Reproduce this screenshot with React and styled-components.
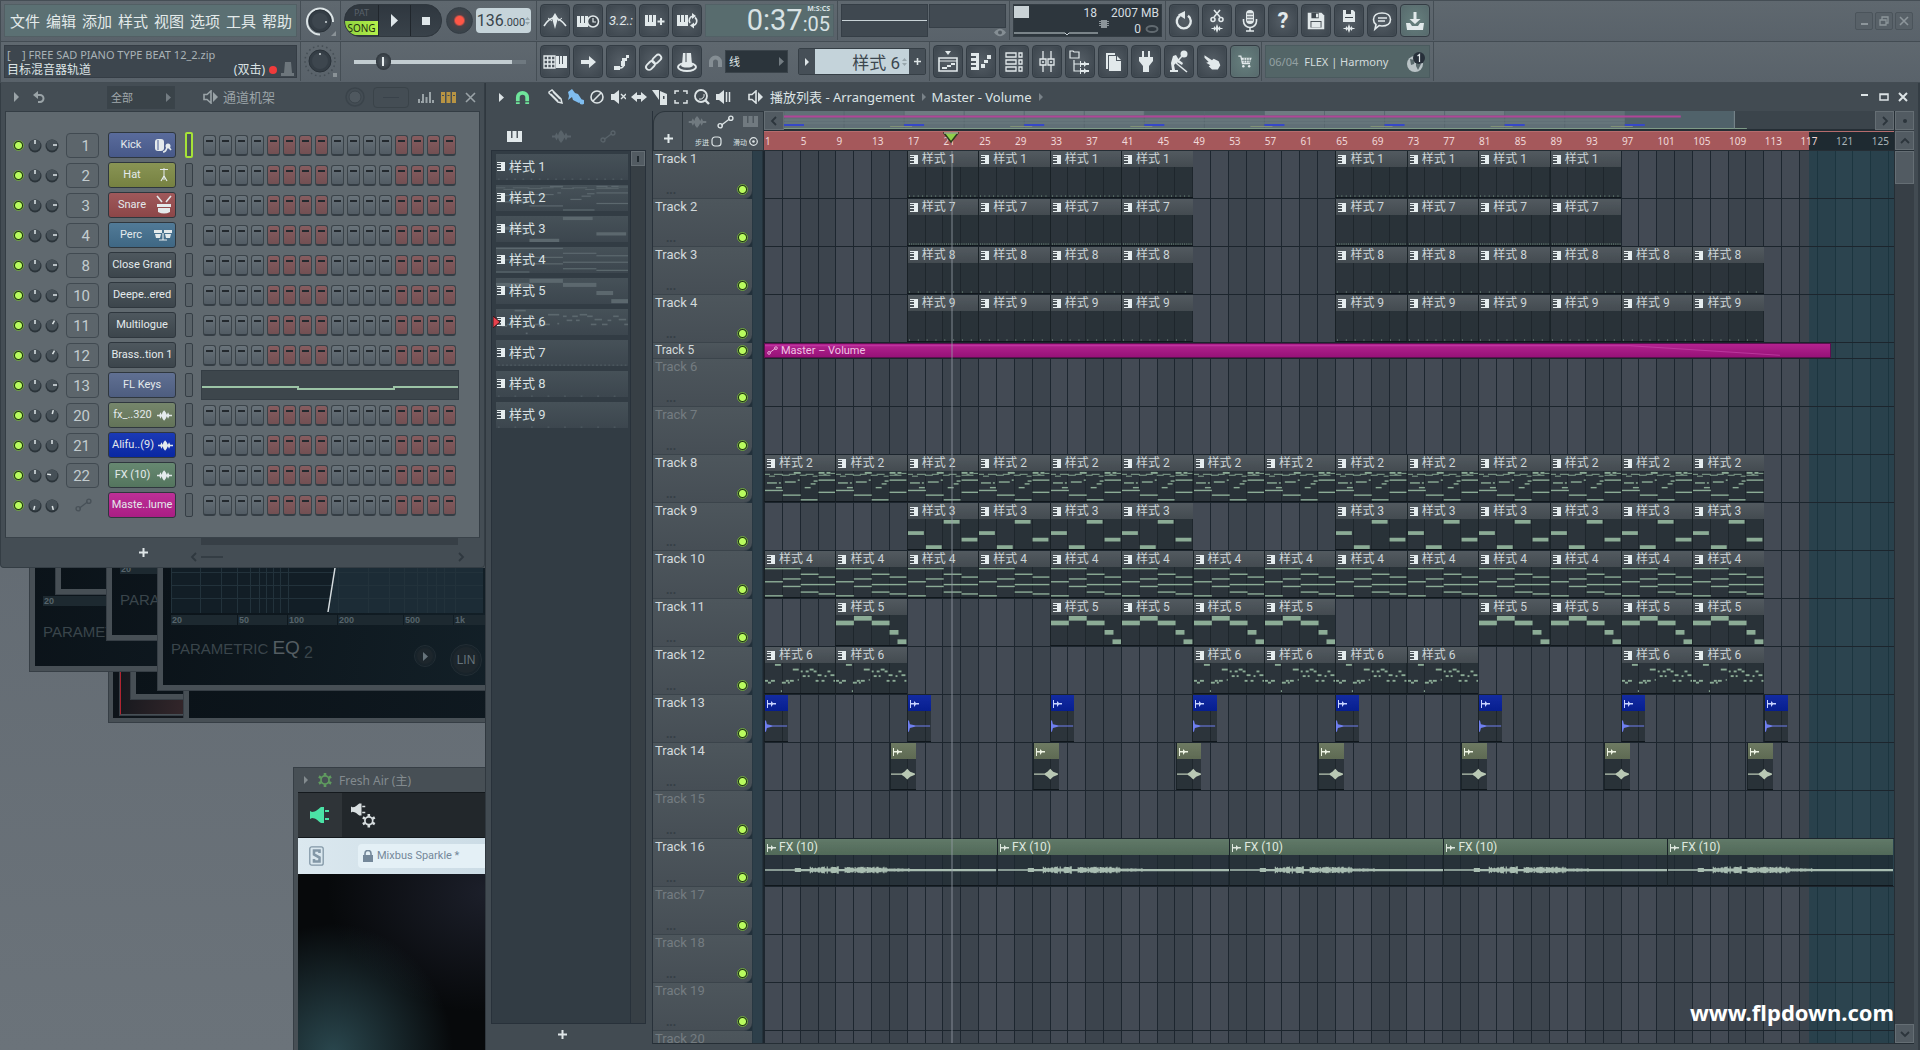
import React from "react";
import styled, { createGlobalStyle, css } from "styled-components";

const UI = `"Noto Sans", "Noto Sans CJK SC", sans-serif`;
const NARROW = `Roboto, "Noto Sans CJK SC", sans-serif`;

const Global = createGlobalStyle`
  * { box-sizing: border-box; }
  body { margin: 0; background: #626a72; overflow: hidden; }
  button, input, select { font: inherit; color: inherit; margin: 0; padding: 0; border: 0; background: none; outline: none; }
  svg { display: block; flex: none; }
`;

/* ---------- timeline data ---------- */
const TOTAL_BARS = 126.57;
const pct = (bars) => `${(bars / TOTAL_BARS) * 100}%`;
const every8 = (from, to) => {
  const out = [];
  for (let b = from; b <= to; b += 8) out.push(b);
  return out;
};
const pat = (n, starts) => starts.map((s) => ({ kind: "pattern", n, at: s, len: 8 }));
const TRACKS = [
  { name: "Track 1", clips: pat(1, [...every8(17, 41), ...every8(65, 89)]) },
  { name: "Track 2", clips: pat(7, [...every8(17, 41), ...every8(65, 89)]) },
  { name: "Track 3", clips: pat(8, [...every8(17, 41), ...every8(65, 105)]) },
  { name: "Track 4", clips: pat(9, [...every8(17, 41), ...every8(65, 105)]) },
  { name: "Track 5", slim: true, clips: [{ kind: "auto", at: 1, len: 119.5 }] },
  { name: "Track 6", off: true, clips: [] },
  { name: "Track 7", off: true, clips: [] },
  { name: "Track 8", clips: pat(2, every8(1, 105)) },
  { name: "Track 9", clips: pat(3, [...every8(17, 41), ...every8(65, 105)]) },
  { name: "Track 10", clips: pat(4, every8(1, 105)) },
  { name: "Track 11", clips: pat(5, [9, ...every8(33, 57), ...every8(81, 105)]) },
  { name: "Track 12", clips: pat(6, [1, 9, ...every8(49, 73), 97, 105]) },
  { name: "Track 13", clips: [1, 17, 33, 49, 65, 81, 97, 113].map((at) => ({ kind: "hit", at, len: 2.7 })) },
  { name: "Track 14", clips: [0, 1, 2, 3, 4, 5, 6].map((k) => ({ kind: "swell", at: 15.1 + 16 * k, len: 2.9 })) },
  { name: "Track 15", off: true, clips: [] },
  {
    name: "Track 16",
    clips: [
      { kind: "fx", at: 1, len: 26.1 },
      { kind: "fx", at: 27.1, len: 26 },
      { kind: "fx", at: 53.1, len: 24 },
      { kind: "fx", at: 77.1, len: 25 },
      { kind: "fx", at: 102.1, len: 25.4 },
    ],
  },
  { name: "Track 17", off: true, clips: [] },
  { name: "Track 18", off: true, clips: [] },
  { name: "Track 19", off: true, clips: [] },
  { name: "Track 20", off: true, clips: [] },
];

const ticks = (step, h) => {
  const out = [];
  for (let x = 1; x < 71; x += step) out.push([x, 32 - h, 1, h]);
  return out;
};
/* x, y, width, height inside a 71 x 32 clip body */
const NOTES = {
  1: ticks(4.4, 2),
  7: ticks(2.2, 2),
  8: ticks(8.9, 2),
  9: ticks(8.9, 2),
  2: [
    [0, 3, 5, 1], [4, 5, 6, 1], [9, 3, 9, 1], [17, 4, 8, 1], [24, 3, 7, 1], [29, 1, 7, 2], [35, 4, 7, 1],
    [41, 3, 8, 1], [48, 5, 5, 1], [54, 1, 6, 2], [59, 3, 3, 1], [62, 1, 4, 2], [66, 2, 5, 1], [54, 4, 12, 1],
    [2, 12, 10, 1.5], [14, 12, 2, 1.5], [20, 11, 11, 1.5], [33, 9, 2, 1.5], [54, 9, 17, 1.5], [11, 17, 6, 1.5],
    [40, 17, 6, 1.5], [46, 13, 5, 1.5], [49, 10, 4, 1.5], [0, 20, 18, 1.5], [18, 25, 18, 1.5], [36, 30, 17, 1.5], [54, 22, 17, 1.5],
  ],
  3: [[0, 13, 16, 4], [18, 28, 16, 4], [36, 1, 16, 4], [54, 20, 16, 4]],
  4: [
    [0, 1, 36, 1.5], [0, 15, 18, 1.5], [0, 30, 18, 1.5], [18, 12, 18, 1.5], [18, 20, 18, 1.5], [36, 7, 18, 1.5],
    [36, 18, 35, 1.5], [36, 26, 18, 1.5], [54, 10, 17, 1.5], [54, 28, 17, 1.5],
  ],
  5: [[0, 6, 18, 5], [18, 1, 18, 5], [36, 6, 18, 5], [54, 16, 9, 5], [62, 26, 9, 5]],
  6: [
    [10, 1, 6, 2], [0, 18, 3, 2], [3, 20, 3, 2], [6, 18, 4, 2], [16, 29, 1, 2], [17, 20, 4, 2], [21, 18, 3, 2],
    [25, 18, 4, 2], [23, 20, 2, 2], [33, 17, 1, 2], [28, 6, 6, 2], [36, 8, 2, 2], [38, 13, 3, 2], [41, 8, 3, 2],
    [45, 6, 4, 2], [43, 13, 2, 2], [49, 8, 3, 2], [51, 18, 3, 2], [53, 12, 4, 2], [57, 18, 3, 2], [60, 13, 2, 2],
    [63, 8, 3, 2], [66, 12, 4, 2], [69, 18, 2, 2],
  ],
};

/* ---------- icons ---------- */
const Svg = ({ s = 24, w, h, vb, children, ...p }) => (
  <svg width={w || s} height={h || s} viewBox={vb || `0 0 ${w || s} ${h || s}`} fill="currentColor" aria-hidden="true" {...p}>
    {children}
  </svg>
);
const keys = "h3v7h1v-7h3v7h1v-7h3v11h-11z";
const wave = "M0 4h2l1-2 1 2 1.500-4 1.500 4 1-2 1 2h2v1h-2l-1 2-1-2-1.500 4-1.500-4-1 2-1-2h-2z";
const line = { fill: "none", stroke: "currentColor", strokeWidth: 1.6 };

const ICONS = {
  metronome: <><path d="M1 17q5-8 10-8q6 0 12 8" {...line} /><path d="M5 9l4 3M19 9l-4 3" {...line} strokeWidth="1" /><path d="M12 4l3 5-3 11-3-11z" /></>,
  pianoClock: <><path d={"M1 7" + keys} /><circle cx="17" cy="12.500" r="5.500" fill="#3f474e" stroke="currentColor" strokeWidth="1.500" /><path d="M17 9v4h3" {...line} strokeWidth="1.200" /></>,
  pianoPlus: <><path d={"M3 6" + keys} /><path d="M18 9h2v2.500h2.500v2H20v2.500h-2v-2.500h-2.500v-2H18z" /></>,
  pianoLoop: <><path d={"M2 6" + keys} /><path d="M15 14a4.500 4.500 0 0 1 3-7M20 8.500a4.500 4.500 0 0 1-2 8" {...line} /><path d="M17 4l4 3-4 3zM19 13.500l-4 3 4 3z" /></>,
  typing: <><path d="M1 6h11v12H1zM1 10h11M1 14h11M4.700 6v12M8.400 6v12" {...line} strokeWidth="1.300" /><path d="M13 6h3v8h1V6h2v8h1V6h4v12H13z" /></>,
  arrow: <path d="M5 10h8V6l7 6-7 6v-4H5z" />,
  slide: <><path d="M5 18h6c3 0 4-2 4-5" {...line} strokeWidth="1.600" /><rect x="5" y="16" width="6" height="4" /><rect x="12" y="11" width="4" height="5" /><path d="M13 8h5v3h-5zM17 5h3v3h-3z" /></>,
  link: <g transform="rotate(-45 12 12)" {...line} strokeWidth="1.800"><rect x="2" y="9" width="10" height="6" rx="3" /><rect x="11" y="9" width="10" height="6" rx="3" /></g>,
  hat: <><path d="M8 3h8l1 12H7z" /><path d="M11 3v11" stroke="#3f474e" /><ellipse cx="12" cy="17" rx="9" ry="4" {...line} strokeWidth="2" /><ellipse cx="12" cy="15.500" rx="6" ry="2" /></>,
  undo: <><path d="M8 6.500A7 7 0 1 0 16 6.800" {...line} strokeWidth="2.400" /><path d="M13 2v8L6 5.500z" /></>,
  cut: <><g {...line}><path d="M9 8l6-7M15 8L9 1" /><circle cx="8" cy="10.500" r="2" /><circle cx="16" cy="10.500" r="2" /></g><path transform="translate(6.500 15)" d={wave} /></>,
  mic: <><rect x="8" y="1" width="8" height="14" rx="4" /><path d="M9 5h6M9 8h6M9 11h6" stroke="#3f474e" /><path d="M5.500 10v2a6.500 6.500 0 0 0 13 0v-2M12 18v4M8 22h8" {...line} /></>,
  save: <><path d="M3 3h15l3 3v15H3z" /><path d="M7 3h8v6H7zM6 12h12v7H6z" fill="#3f474e" /><rect x="12" y="4" width="2.500" height="4" /><path d="M7 13h10v6H7z" /></>,
  saveWave: <><path d="M6 1h10l2 2v10H6z" /><path d="M9 1h5v4H9zM8 8h8v1H8z" fill="#3f474e" /><path transform="translate(6.500 15)" d={wave} /></>,
  chat: <><path d="M12 4c5 0 8.500 2.500 8.500 6.500S17 17 12 17c-1 0-2-.1-3-.4L5 20l1-4.500C4.300 14.300 3.500 12.500 3.500 10.500 3.500 6.500 7 4 12 4z" {...line} /><path d="M8 9h9M8 12h7" {...line} /></>,
  down: <><path d="M10.500 3h3v7h4L12 15 6.500 10h4z" /><path d="M3 14h4l2 3h6l2-3h4l-1 7H4z" /></>,
  playlist: <><path d="M9 1h6l-3 4z" /><path d="M3 8h18v13H3z" {...line} /><path d="M3 11h18" {...line} strokeWidth="1" /><path d="M6 17h5v2H6zM11 15h4v2h-4zM15 13h4v2h-4z" /></>,
  roll: <><path d="M2 3h8v17H2v-3h5v-2H2v-2h5v-2H2V8h5V6H2z" /><path d="M12 14h4v4h-4zM15 10h4v3h-4zM18 5h4v4h-4z" /></>,
  rack: <path d="M4 3h10v4H4zM4 10h10v4H4zM4 17h10v4H4zM17 3h3v4h-3zM17 10h3v4h-3zM17 17h3v4h-3z" {...line} strokeWidth="1.300" />,
  mixer: <path d="M8 1v8M8 15v7M16 1v8M16 15v7M5 9h6v6H5zM13 9h6v6h-6zM7 12h2M15 12h2" {...line} strokeWidth="1.300" />,
  browser: <><path d="M2 1h3l1 1h5v6H2z" {...line} strokeWidth="1.200" /><path d="M6 10v11h6M6 14h6" {...line} strokeWidth="1.200" /><path d="M12 11h1v2h3v-2l2 2h3v2h-3l-2 2v-2h-3v2h-1zM12 18h1v2h3v-2l2 2h3v2h-3l-2 2v-2h-3v2h-1z" /></>,
  copy: <><path d="M5 3h9v2H7v14H5z" /><path d="M8 6h7v5h5v10H8z" /><path d="M16 6l4 4h-4z" /></>,
  plug: <><path d="M8 1h2v6H8zM14 1h2v6h-2zM5 7h14v4l-4 5v6H9v-6l-4-5z" /></>,
  tap: <><circle cx="17" cy="4" r="3.500" /><path d="M15 6l-6 7" {...line} /><path d="M6 6l3-1 3 5 4 3-1 2-5-3-3 3 1 5h3v2H3v-2h2l-1-7z" /><path d="M9 13l11 9" {...line} /></>,
  hand: <path d="M3 4l9 6 2-2 6 3 2 5-3 5h-7l-4-4 2-1-5-3 3-1-5-5z" />,
  cart: <><path d="M4 5h3l2 9h9" {...line} /><path d="M7.500 7H20l-2 6H9z" /><path d="M11 7v6M14 7v6M17 7v6M8 10h11" stroke="#5d7372" strokeWidth=".8" /><circle cx="10" cy="17" r="1.500" /><circle cx="17" cy="17" r="1.500" /></>,
};
const Icon = ({ name, s = 24 }) => <Svg s={s} vb="0 0 24 24">{ICONS[name]}</Svg>;

const Speaker = () => (
  <Svg w={16} h={14}><path d="M1 4.500h3l4-3.500v12l-4-3.500H1z" {...line} /><path d="M10 2l5 5-5 5z" /></Svg>
);
const Magnet = ({ s = 16 }) => (
  <Svg s={s} vb="0 0 16 16"><path d="M1 12V8a7 7 0 0 1 14 0v4h-4V8a3 3 0 0 0-6 0v4z" /><path d="M1 13h4v2H1zM11 13h4v2h-4z" /></Svg>
);
const Tri = ({ w = 5, h = 9 }) => <Svg w={w} h={h}><path d={`M0 0L${w} ${h / 2}L0 ${h}z`} /></Svg>;
const Node = ({ w = 16, h = 13 }) => (
  <Svg w={w} h={h} vb="0 0 16 13"><path d="M4 9.500l8-6" {...line} strokeWidth="1.300" /><circle cx="3" cy="10" r="2" {...line} strokeWidth="1.300" /><circle cx="13" cy="3" r="2" {...line} strokeWidth="1.300" /></Svg>
);
const Wave = ({ w = 19, h = 13 }) => (
  <Svg w={w} h={h} vb="0 0 19 13"><path d="M0 5.500h3l1.500-3 1.500 3 1-3 2-2.500 2 2.500 1.500 3 1.500-3 1.500 3H19v2h-3.500l-1.500 3-1.500-3L11 10.500 9 13l-2-2.500-1-3-1.500 3-1.500-3H0z" /></Svg>
);
const Keys = ({ w = 15, h = 11 }) => <Svg w={w} h={h} vb="0 0 11 11" preserveAspectRatio="none"><path d={"M0 0" + keys} /></Svg>;
const Plus = ({ s = 9 }) => <Svg s={s} vb="0 0 9 9"><path d="M3.500 0h2v3.500H9v2H5.500V9h-2V5.500H0v-2h3.500z" /></Svg>;
const ClipKeys = () => <Svg s={9} color="#e6edef"><path d="M0 0h8v9H0V8h4V6H0V5h4V3H0V2h4V1H0z" /></Svg>;
const Sample = () => <Svg w={9} h={8}><path d="M0 0h1v3h3V1l2 2h3v1.500H6L4 7V4.500H1V8H0z" /></Svg>;
const Chev = ({ dir }) => (
  <Svg s={10}><path d={{ left: "M7 1L3 5l4 4", right: "M3 1l4 4-4 4", up: "M1 7l4-4 4 4", down: "M1 3l4 4 4-4" }[dir]} {...line} strokeWidth="1.800" /></Svg>
);
const Spin = () => <Svg w={5} h={10}><path d="M0 4l2.500-3L5 4zM0 6l2.500 3L5 6z" /></Svg>;

/* ---------- shell ---------- */
const Shell = styled.div`
  height: 100vh; display: flex; flex-direction: column; overflow: hidden;
  background: #626a72; color: #dfe6e8; font-family: ${UI}; font-size: 12px;
`;
const Toolbar = styled.header`border-top: 1px solid #454e55; flex: none;`;
const ToolRow = styled.div`
  display: flex; height: 41px; background: linear-gradient(#5f686f, #59626a); padding-bottom: 1px;
  border-bottom: 1px solid #434c53; border-left: 1px solid #434c53;
`;
const Group = styled.div`
  display: flex; align-items: center; gap: 3px; flex: none; width: ${(p) => p.$w}px;
  padding: 0 3px; border-right: 1px solid #454e55;
`;
const Menu = styled.nav`
  flex: 1; height: 33px; display: flex; align-items: center; gap: 6px; padding-left: 5px;
  background: #5b7073; border: 1px solid #525f64;
`;
const MenuItem = styled.button`font-size: 15px; line-height: 30px; color: #e3eaea; white-space: nowrap;`;
const Hint = styled.div`
  flex: 1; height: 33px; padding: 1px 2px; background: #3d464e; border: 1px solid #353d45;
  line-height: 15px; font-size: 11px;
`;
const HintLine = styled.div`
  display: flex; align-items: center; gap: 4px; height: 15px; white-space: pre; font-size: ${(p) => (p.$dim ? 11 : 12)}px;
  color: ${(p) => (p.$dim ? "#a9b2b6" : "#dbe3e5")};
`;
const Grow = styled.span`flex: 1;`;
const Dot = styled.i`width: 8px; height: 8px; border-radius: 50%; background: #f03b3b;`;

const ToolBtn = styled.button`
  width: 30px; height: 33px; flex: none; display: flex; align-items: center; justify-content: center;
  border-radius: 4px; border: 1px solid #333c44; color: #e2e9eb;
  background: ${(p) => (p.$teal ? "radial-gradient(#67807e, #56696c)" : "radial-gradient(#555e66, #3b444c)")};
  box-shadow: inset 0 0 0 1px ${(p) => (p.$teal ? "#5d7072" : "#434c54")};
  font-size: ${(p) => (p.$big ? 22 : 13)}px;
  font-style: ${(p) => (p.$big ? "normal" : "italic")};
  font-family: ${NARROW};
`;
const Transport = styled.div`
  display: flex; width: 98px; height: 33px; border-radius: 16px; overflow: hidden; flex: none;
  background: #262d34; border: 1px solid #30383f;
`;
const ModeBtn = styled.button`
  width: 33px; display: flex; flex-direction: column; font-size: 9px; text-align: center; line-height: 16px; color: #59616a;
  background: #30383f; align-items: stretch;
`;
const Song = styled.span`
  display: block; background: linear-gradient(90deg, #8ed23f, #b4f04a); color: #1c2a12;
  font-size: 10px; line-height: 14px;
`;
const PadBtn = styled.button`
  flex: 1; display: flex; align-items: center; justify-content: center; color: #dfe7ea;
  border-left: 1px solid #20262c; background: linear-gradient(#2f373f, #39424a);
`;
const RecBtn = styled.button`
  width: 27px; height: 27px; border-radius: 50%; margin-left: 1px; flex: none;
  background: radial-gradient(circle, #ff5646 0 4px, #4a4248 6px, #3a434a 11px); border: 1px solid #343c44;
`;
const Tempo = styled.div`
  width: 55px; height: 25px; flex: none; border-radius: 4px; background: #c6d4da; color: #39444c;
  display: flex; align-items: center; justify-content: center; font-family: ${NARROW}; font-size: 16px; line-height: 25px;
  small { font-size: 11px; padding-top: 4px; }
  svg { color: #97a6ac; }
`;
const Pitch = styled.input`
  appearance: none; width: 172px; height: 16px; margin-left: 10px;
  background: linear-gradient(90deg, #c3cdd1 0 92%, #6f7980 92%) center / 100% 4px no-repeat;
  &::-webkit-slider-thumb {
    appearance: none; width: 15px; height: 17px; border-radius: 8px;
    background: linear-gradient(90deg, transparent 6px, #e6edef 6px 8px, transparent 8px) center / 100% 9px no-repeat, radial-gradient(#59626a, #20272d);
  }
`;
const TimeBox = styled.div`
  flex: 1; height: 33px; background: #586c6e; border: 1px solid #526166; padding-right: 3px;
  display: flex; justify-content: flex-end; font-family: ${NARROW}; font-size: 29px; line-height: 31px; color: #d8e2e4;
  div { display: flex; flex-direction: column; }
  small { font-size: 20px; line-height: 22px; }
  sup { text-align: right; font-family: ${UI}; font-size: 7px; line-height: 8px; font-weight: 700; }
`;
const Scope = styled.div`
  width: 87px; height: 33px; background: linear-gradient(#c9d3d7, #c9d3d7) center / 100% 1px no-repeat #3f4850;
  border: 1px solid #353e46;
`;
const Spectrum = styled.div`
  flex: 1; height: 33px; display: flex; flex-direction: column; align-items: flex-end; color: #858e94;
  &::before { content: ""; width: 100%; height: 24px; background: #414a52; border: 1px solid #363f47; }
`;
const Cpu = styled.div`
  flex: 1; height: 33px; display: grid; grid-template-columns: 85px 1fr; background: #2d363d; border: 1px solid #343d44;
  font-family: ${NARROW}; font-size: 12px; line-height: 16px; text-align: right; color: #d5dde0;
`;
const CpuMeter = styled.div`
  position: relative; padding-right: 2px;
  svg { position: absolute; left: 0; top: 0; color: #c9d2d6; }
`;
const CpuStats = styled.div`
  padding-right: 2px; position: relative;
  span { display: flex; justify-content: flex-end; align-items: center; gap: 4px; height: 16px; }
  > svg { position: absolute; left: 0; top: 15px; color: #8c959a; }
`;

const PickWrap = styled.label`
  position: relative; display: flex; align-items: center; width: ${(p) => p.$w}px; height: 23px; flex: none;
  background: ${(p) => (p.$dark ? "#2b343b" : "#3a4349")}; border: 1px solid #3a434a; color: ${(p) => (p.$dark ? "#dfe6e8" : "#a0a8ac")};
  select { appearance: none; width: 100%; height: 100%; padding-left: 3px; font-size: 11px; }
  svg { position: absolute; right: 3px; color: #737c82; pointer-events: none; }
`;
const PatternBox = styled.div`display: flex; height: 27px; margin-left: 7px; border: 1px solid #363f46; border-radius: 2px;`;
const PatBtn = styled.button`width: 16px; background: #464f57; display: flex; align-items: center; justify-content: center;`;
const PatField = styled.label`
  display: flex; align-items: center; width: 94px; background: #c4d3da; color: #3c474f; padding-right: 2px; gap: 2px;
  input { width: 100%; min-width: 0; text-align: right; font-size: 17px; font-family: ${NARROW}; }
  svg { color: #98a6ac; }
`;
const News = styled.div`
  flex: 1; height: 33px; display: flex; align-items: center; gap: 6px; padding: 0 3px; background: #536567;
  border: 1px solid #4a5a5e; font-size: 11px; color: #d3dcdd;
  time { color: #94a1a3; }
`;
const WinBtns = styled.div`margin-left: auto; display: flex; gap: 2px; align-items: center; padding-right: 7px;`;
const WinBtn = styled.button`
  width: 18px; height: 18px; border: 1px solid #4b545b; border-radius: 2px; color: #8d969b; background: #586168;
  display: flex; align-items: center; justify-content: center;
`;

const BigKnob = ({ arc }) => (
  <Svg s={33} vb="0 0 33 33">
    {arc ? <path d="M16 30.500A13 13 0 1 1 29 18" fill="none" stroke="#dce4e6" strokeWidth="2" /> : <circle cx="16" cy="16" r="15" fill="none" stroke="#454e55" strokeWidth="1.500" strokeDasharray="1.500 3" />}
    <circle cx="16" cy={arc ? 17 : 16} r="11" fill="#343d45" stroke="#2a3239" />
    <circle cx="16" cy={arc ? 17 : 16} r="8" fill="#3d464e" />
    <circle cx={arc ? 22 : 16} cy={arc ? 18 : 9} r="1" fill="#cfd7da" />
    {arc ? <path d="M32 27v5h-5z" fill="#8a9297" /> : <path d="M29 28h4v4h-4z" fill="#8a9297" />}
  </Svg>
);

const MENU = ["文件", "编辑", "添加", "样式", "视图", "选项", "工具", "帮助"];

function TopBar() {
  return (
    <Toolbar>
      <ToolRow>
        <Group $w={300}><Menu>{MENU.map((m) => <MenuItem key={m}>{m}</MenuItem>)}</Menu></Group>
        <Group $w={40}><BigKnob arc /></Group>
        <Group $w={196}>
          <Transport>
            <ModeBtn aria-label="PAT SONG">PAT<Song>SONG</Song></ModeBtn>
            <PadBtn aria-label="Play"><Tri w={7} h={13} /></PadBtn>
            <PadBtn aria-label="Stop"><Svg s={8}><path d="M0 0h8v8H0z" /></Svg></PadBtn>
          </Transport>
          <RecBtn aria-label="Record" />
          <Tempo><span>136</span><small>.000</small><Spin /></Tempo>
        </Group>
        <Group $w={301}>
          <ToolBtn aria-label="Metronome"><Icon name="metronome" /></ToolBtn>
          <ToolBtn aria-label="Wait for input"><Icon name="pianoClock" /></ToolBtn>
          <ToolBtn aria-label="Countdown">3.2.:</ToolBtn>
          <ToolBtn aria-label="Overdub"><Icon name="pianoPlus" /></ToolBtn>
          <ToolBtn aria-label="Loop recording"><Icon name="pianoLoop" /></ToolBtn>
          <TimeBox><span>0:37</span><div><sup>M:S:CS</sup><small>:05</small></div></TimeBox>
        </Group>
        <Group $w={172}>
          <Scope />
          <Spectrum><Svg w={12} h={9}><path d="M0 4.500Q6-3 12 4.500Q6 12 0 4.500z" /><circle cx="6" cy="4.500" r="2" fill="#525b62" /></Svg></Spectrum>
        </Group>
        <Group $w={156}>
          <Cpu>
            <CpuMeter>18<Svg w={84} h={31}><path d="M0 1h15v12H0z" /><path d="M0 28h51l2 2 2-2h29" {...line} strokeWidth="1" /></Svg></CpuMeter>
            <CpuStats><Svg w={10} h={8}><path d="M2 0h6v8H2zM0 1h10v1H0zM0 3h10v1H0zM0 5h10v1H0z" /></Svg><span>2007 MB</span><span>0<Svg w={14} h={8}><ellipse cx="7" cy="4" rx="5.500" ry="3" fill="none" stroke="#616a70" strokeWidth="2" /></Svg></span></CpuStats>
          </Cpu>
        </Group>
        <Group $w={268}>
          {["undo", "cut", "mic"].map((n) => <ToolBtn key={n} aria-label={n}><Icon name={n} /></ToolBtn>)}
          <ToolBtn $big aria-label="Help"><b>?</b></ToolBtn>
          {["save", "saveWave", "chat"].map((n) => <ToolBtn key={n} aria-label={n}><Icon name={n} s={n === "save" ? 22 : 24} /></ToolBtn>)}
          <ToolBtn $teal aria-label="Download"><Icon name="down" /></ToolBtn>
        </Group>
        <WinBtns>
          <WinBtn aria-label="Minimize"><Svg s={10}><path d="M2 7h7v2H2z" /></Svg></WinBtn>
          <WinBtn aria-label="Restore"><Svg s={10}><path d="M1 4h6v5H1zM3 4V1h6v6H7" {...line} strokeWidth="1.300" /></Svg></WinBtn>
          <WinBtn aria-label="Close"><Svg s={10}><path d="M1 1l8 8M9 1L1 9" {...line} /></Svg></WinBtn>
        </WinBtns>
      </ToolRow>
      <ToolRow>
        <Group $w={300}>
          <Hint>
            <HintLine $dim>{"[    ] FREE SAD PIANO TYPE BEAT 12_2.zip"}</HintLine>
            <HintLine>目标混音器轨道<Grow />(双击)<Dot /><Svg w={13} h={15} color="#6d767c"><path d="M4 0h6l1 11h2v3H0v-3h3z" /></Svg></HintLine>
          </Hint>
        </Group>
        <Group $w={40}><BigKnob /></Group>
        <Group $w={196}><Pitch type="range" defaultValue="14" aria-label="Song position" /></Group>
        <Group $w={393}>
          {["typing", "arrow", "slide", "link", "hat"].map((n) => <ToolBtn key={n} aria-label={n}><Icon name={n} /></ToolBtn>)}
          <Svg w={17} h={14} vb="-4 0 17 14" color="#858e94"><path d="M0 12V7a6.500 6.500 0 0 1 13 0v5H9V7a2.500 2.500 0 0 0-5 0v5z" /></Svg>
          <PickWrap $w={63} $dark><select aria-label="Snap"><option>线</option></select><Tri w={5} h={9} /></PickWrap>
          <PatternBox>
            <PatBtn aria-label="Pattern menu"><Tri w={4} h={8} /></PatBtn>
            <PatField><input aria-label="Pattern" defaultValue="样式 6" /><Spin /></PatField>
            <PatBtn aria-label="Add pattern"><Plus s={7} /></PatBtn>
          </PatternBox>
        </Group>
        <Group $w={332}>
          {["playlist", "roll", "rack", "mixer", "browser", "copy", "plug", "tap", "hand"].map((n) => <ToolBtn key={n} aria-label={n}><Icon name={n} s={n === "hand" ? 20 : 24} /></ToolBtn>)}
          <ToolBtn $teal aria-label="Shop"><Icon name="cart" s={20} /></ToolBtn>
        </Group>
        <Group $w={172}>
          <News>
            <time>06/04</time>FLEX | Harmony<Grow />
            <Svg s={20}><circle cx="9" cy="12" r="8" fill="#b9c3c6" /><path d="M4 7l5 1-1 4-3 1zM10 10l5 2-3 6-2-4z" fill="#5a6a6d" /><circle cx="13" cy="6" r="6" fill="#27303a" /><path d="M11.500 4l2-1.500V10" fill="none" stroke="#e3eaec" strokeWidth="1.200" /></Svg>
          </News>
        </Group>
      </ToolRow>
    </Toolbar>
  );
}

/* ---------- channel rack ---------- */
const Desk = styled.section`
  position: relative; width: 486px; flex: none; overflow: hidden; border-right: 1px solid #30383f;
  background: linear-gradient(#5d656d, #6b737a);
`;
const Rack = styled.div`
  position: relative; z-index: 5; background: #444d54; border: 1px solid #343d44; border-top: 0; padding: 0 4px;
  border-radius: 0 0 4px 4px;
`;
const RackHead = styled.div`height: 28px; display: flex; align-items: center; padding: 0 4px 0 9px; color: #9aa3a7;`;
const RackTitle = styled.span`font-size: 13px; line-height: 18px; margin-left: 4px; flex: 1;`;
const HeadBtn = styled.button`display: flex; align-items: center; color: ${(p) => p.$c || "inherit"}; margin-left: ${(p) => p.$ml || 0}px;`;
const SwingBox = styled.span`
  width: 36px; height: 21px; border: 1px solid #3a4349; border-radius: 4px; margin: 0 9px 0 8px;
  background: linear-gradient(#39424a, #39424a) center / 16px 1px no-repeat;
`;
const RackBody = styled.div`background: #60696f; border: 1px solid #343d44; border-bottom-color: #394249; padding: 18px 0; height: 427px;`;
const Row = styled.div`display: flex; align-items: center; height: 30px; padding-left: 7px;`;
const Led = styled.input`
  appearance: none; width: 11px; height: 11px; flex: none; border-radius: 50%;
  background: radial-gradient(circle, #b9fb5e 0 3px, #1f3214 4px, #2c451c 5px);
  border: 1px solid #6da43d;
`;
const Knobs = styled.div`display: flex; gap: 3px; margin-left: 4px;`;
const NumBox = styled.div`
  width: 33px; height: 25px; margin-left: 7px; flex: none; border: 1px solid #414a51; border-radius: 4px; background: #5c656b;
  font-family: ${NARROW}; font-size: 15px; line-height: 24px; text-align: right; padding-right: 8px; color: #c3cccf;
  &[data-link] { border-color: transparent; background: none; color: #485158; padding: 4px 0 0 8px; }
`;
const ChanBtn = styled.button`
  width: 68px; height: 26px; margin-left: 9px; flex: none; border-radius: 3px; border: 1px solid #2f373e; overflow: hidden;
  display: flex; align-items: center; justify-content: center; gap: 4px; white-space: nowrap; color: #e4eaec;
  font-family: ${NARROW}; font-size: 11px; line-height: 24px; ${(p) => p.$spread && css`justify-content: space-between; padding: 0 3px;`}
  background: linear-gradient(rgba(255,255,255,.07), rgba(0,0,0,.08)), ${(p) => p.$c};
`;
const Name = styled.span`flex: 1; text-align: center;`;
const Select = styled.i`
  width: 8px; height: 24px; margin: 0 10px 0 9px; flex: none; border: 1px solid #353e45; border-radius: 2px; background: #596268;
  ${(p) => p.$on && css`border: 2px solid #a6e337; height: 26px; background: #4b545a;`}
`;
const Steps = styled.div`display: flex; gap: 3px;`;
const Step = styled.input`
  appearance: none; width: 13px; height: 21px; border-radius: 3px; border: 1px solid #3a4349; border-bottom: 2px solid #343d44;
  background: linear-gradient(#23292e, #23292e) 50% 4px / 7px 2px no-repeat, linear-gradient(${(p) => (p.$red ? "#875c5f, #725053" : "#69737a, #525c64")});
`;
const MiniRoll = styled.div`width: 258px; height: 30px; margin-left: -2px; background: #3d464c; border: 1px solid #343d44;`;
const RackFoot = styled.div`height: 29px; display: flex; align-items: flex-start; padding: 0 14px 0 124px; color: #dfe6e8;`;
const AddBtn = styled.button`padding: 10px; color: #dfe6e8; line-height: 0;`;
const FootScroll = styled.div`
  flex: 1; margin-left: 31px; color: #2f383f;
  &::before { content: ""; display: block; height: 7px; margin: 0 8px 7px 12px; background: #373f46; }
  div { display: flex; justify-content: space-between; align-items: center; }
  i { width: 22px; height: 2px; background: #343d44; margin: 0 auto 0 2px; }
`;

const SmallKnob = ({ a }) => (
  <Svg w={14} h={15}>
    <circle cx="7" cy="8" r="6.500" fill="#2b343a" />
    <circle cx="7" cy="7" r="5.500" fill="#465057" />
    <path d="M7 2v4" stroke="#dfe6e8" strokeWidth="1.500" transform={`rotate(${a} 7 7)`} />
  </Svg>
);
const DRUMS = {
  kick: <Svg w={18} h={15}><rect x="1" y="1" width="9" height="12" rx="3" /><path d="M4 2v10" stroke="#4d5f96" /><path d="M9 14q3 0 4-5M13 7l4 5" {...line} /><circle cx="14" cy="8" r="2.500" /></Svg>,
  hat: <Svg w={16} h={16}><path d="M4 2h8v1H4zM7.500 1h1v12h-1z" /><path d="M8 9l-3 5M8 9l3 5" {...line} strokeWidth="1.200" /></Svg>,
  snare: <Svg w={16} h={20}><path d="M1 1l5 6M15 1l-5 6" {...line} /><path d="M1 9h14v3H1zM2 13h12v4q-6 3-12 0z" /></Svg>,
  perc: <Svg w={18} h={14}><path d="M0 2h8v3H0zM1 6h6l-1 4H2zM10 2h8v3h-8zM11 6h6l-1 4h-4z" /><path d="M5 12h8M9 5v7" {...line} strokeWidth="1.200" /></Svg>,
  wave: <Wave w={15} h={11} />,
};
const CHANNELS = [
  ["1", "Kick", "#4d6094", "kick", 0, 90],
  ["2", "Hat", "#808c47", "hat", 0, 90],
  ["3", "Snare", "#984c4e", "snare", 0, 90],
  ["4", "Perc", "#44708f", "perc", 0, 90],
  ["8", "Close Grand", "#414b52", null, 0, 90],
  ["10", "Deepe..ered", "#414b52", null, 0, 90],
  ["11", "Multilogue", "#414b52", null, 0, 30],
  ["12", "Brass..tion 1", "#414b52", null, 0, 30],
  ["13", "FL Keys", "#54658a", null, 0, 90],
  ["20", "fx_..320", "#6b7d60", "wave", 0, 15],
  ["21", "Alifu..(9)", "#0a2bb0", "wave", 0, 0],
  ["22", "FX (10)", "#5b7f66", "wave", 0, -80],
  ["", "Maste..lume", "#b8208f", null, 195, 165],
];

function ChannelRack() {
  return (
    <Rack>
      <RackHead>
        <HeadBtn aria-label="Rack menu"><Tri w={5} h={10} /></HeadBtn>
        <HeadBtn aria-label="Undo" $ml={14}><Svg s={12}><path d="M5 0v8L0 4z" /><path d="M4 4h3a3 3 0 0 1 0 7H5" {...line} strokeWidth="2" /></Svg></HeadBtn>
        <HeadBtn as="span" $ml={62}><PickWrap $w={68}><select aria-label="Channel filter"><option>全部</option></select><Tri w={5} h={9} /></PickWrap></HeadBtn>
        <HeadBtn as="span" $ml={28}><Speaker /></HeadBtn>
        <RackTitle>通道机架</RackTitle>
        <Svg s={20}><circle cx="10" cy="10" r="9" fill="none" stroke="#3b444b" strokeWidth="1.500" /><circle cx="10" cy="10" r="6" fill="#4f585f" stroke="#3b444b" /></Svg>
        <SwingBox />
        <HeadBtn aria-label="Graph editor"><Svg w={16} h={12}><path d="M0 8h2v4H0zM3 10h2v2H3zM4 3h2v9H4zM7.500 6h2v6h-2zM11 1h2v11h-2zM14 9h2v3h-2z" /></Svg></HeadBtn>
        <HeadBtn aria-label="Step sequencer" $c="#b89443" $ml={7}><Svg w={15} h={11}><path d="M0 0h4v11H0zM5.500 0h4v11h-4zM11 0h4v11h-4z" /><path d="M1 3h2v1H1zM6.500 3h2v1h-2zM12 3h2v1h-2z" fill="#444d54" /></Svg></HeadBtn>
        <HeadBtn aria-label="Close rack" $ml={9}><Svg s={11}><path d="M1 1l9 9M10 1l-9 9" {...line} /></Svg></HeadBtn>
      </RackHead>
      <RackBody>
        {CHANNELS.map(([num, name, color, icon, pan, vol], r) => (
          <Row key={name}>
            <Led type="checkbox" defaultChecked aria-label={`${name} on`} />
            <Knobs><SmallKnob a={pan} /><SmallKnob a={vol} /></Knobs>
            <NumBox data-link={num ? undefined : ""}>{num || <Node w={17} h={14} />}</NumBox>
            <ChanBtn $c={color} $spread={!!icon}><Name>{name}</Name>{icon && DRUMS[icon]}</ChanBtn>
            <Select $on={r === 0} />
            {name === "FL Keys" ? (
              <MiniRoll><Svg w={256} h={28}><path d="M0 16h96v2h96v-2h64" fill="none" stroke="#9cc4a6" strokeWidth="2" /></Svg></MiniRoll>
            ) : (
              <Steps>{Array.from({ length: 16 }, (_, i) => <Step key={i} type="checkbox" aria-label={`${name} step ${i + 1}`} $red={(i >> 2) % 2 === 1} />)}</Steps>
            )}
          </Row>
        ))}
      </RackBody>
      <RackFoot>
        <AddBtn aria-label="Add channel"><Plus /></AddBtn>
        <FootScroll><div><Chev dir="left" /><i /><Chev dir="right" /></div></FootScroll>
      </RackFoot>
    </Rack>
  );
}

/* ---------- desktop windows behind the rack ---------- */
const Win = styled.div`
  position: absolute; left: ${(p) => p.$x}px; top: ${(p) => p.$y}px; width: ${(p) => p.$w}px; height: ${(p) => p.$h}px;
  border: ${(p) => p.$b || 5}px solid #474f55; outline: 1px solid #363e45; background: linear-gradient(100deg, #0b1319, ${(p) => p.$to || "#111c24"});
  overflow: hidden; color: #364147; font-family: "Liberation Sans", sans-serif;
`;
const RedWin = styled(Win)`border-left: 1px solid #b02430;`;
const EqName = styled.div`
  font-size: 15px; line-height: 20px; white-space: nowrap; padding-left: 8px; color: #3a454b;
  b { font-size: 19px; font-weight: 400; color: #545d62; } sub { font-size: 16px; }
`;
const EqScale = styled.div`
  display: flex; height: 10px; margin: ${(p) => p.$mt || 2}px 0 ${(p) => p.$mb || 0}px 8px; gap: 1px; font-size: 9px; line-height: 10px; font-weight: 700; color: #56646b;
  span { background: #1d2930; flex: none; padding-left: 1px; }
`;
const EqFoot = styled.div`display: flex; align-items: flex-start; padding-top: 13px;`;
const RoundBtn = styled.button`
  width: ${(p) => p.$s}px; height: ${(p) => p.$s}px; border-radius: 50%; background: #1d262c; border: 2px solid #18232a; outline: 1px solid #222d34;
  color: #66737a; font-size: 12px; display: flex; align-items: center; justify-content: center; flex: none; margin: ${(p) => p.$mt}px ${(p) => p.$mr}px 0 0;
`;
const AirHead = styled.div`
  height: 24px; display: flex; align-items: center; gap: 7px; padding-left: 6px; background: #474f55; color: #838b8f; font-family: ${UI}; font-size: 12px;
  svg + svg { color: #5f9a5f; margin-left: 3px; }
`;
const AirTools = styled.div`height: 46px; display: flex; background: #22272b; border: 1px solid #14191d; border-width: 1px 0;`;
const AirTab = styled.button`width: 44px; display: flex; align-items: center; justify-content: center; background: ${(p) => (p.$on ? "#2f3438" : "none")}; color: ${(p) => (p.$on ? "#4be3a6" : "#d9dfe1")};`;
const AirBar = styled.div`height: 36px; display: flex; align-items: center; gap: 34px; padding-left: 11px; background: linear-gradient(90deg, #dbe8ef, #c3d5e0); color: #73899a;`;
const Preset = styled.div`flex: 1; height: 24px; display: flex; align-items: center; gap: 4px; padding-left: 5px; border-radius: 4px 0 0 4px; background: #e4f0f6; font: 11px/24px Roboto, sans-serif; color: #74889a; white-space: nowrap;`;
const AirView = styled.div`
  height: 180px; border-radius: 6px 0 0 0; background:
  radial-gradient(120px 130px at 35px 100%, #2a474e, transparent), radial-gradient(160px 120px at 190px 10%, #1c1f2a, transparent), #07090b;
`;
const Air = styled(Win)`background: #0a0d0f; border-top: 0; border-right: 0;`;

function EqPlot() {
  const v = [0, 29, 50, 66, 79, 88, 95, 102, 109, 117, 167, 197, 218, 233, 246, 256, 265, 273, 284];
  return (
    <Svg w={320} h={45} vb="-8 0 320 45">
      <path d="M0 0h320v45H0z" fill="#121e26" />
      <path d={"M165 0h155v45H158z"} fill="#1c2c36" />
      <path d={v.map((x) => `M${x + 0.5} 0v45`).join("") + "M0 4.500h320M0 17.500h320M0 30.500h320"} stroke="#22323b" fill="none" />
      <path d="M164 0l-7 44" stroke="#d5dcdf" strokeWidth="1.500" />
    </Svg>
  );
}
const gearPath = "M8 0v3M8 13v3M1 4l2.600 1.500M12.400 10.500L15 12M1 12l2.600-1.500M12.400 5.500L15 4";
const Gear = ({ s = 15 }) => (
  <Svg s={s} vb="0 0 16 16"><circle cx="8" cy="8" r="4.600" {...line} strokeWidth="2" /><path d={gearPath} {...line} strokeWidth="3" /></Svg>
);
const plugPath = "M0 6l2 1c4 0 6-3 9-5h3v16h-3c-3-2-5-5-9-5l-2 1zM15 5h4v2h-4zM15 13h4v2h-4z";

function Desktop() {
  return (
    <Desk>
      <ChannelRack />
      <Win $x={109} $y={440} $w={420} $h={199} $b={4} $to="#2c2327">
        <RedWin $x={7} $y={0} $w={64} $h={188} $b={1} $to="#33262a" />
        <Win $x={18} $y={100} $w={500} $h={72} />
        <Win $x={71} $y={120} $w={500} $h={76} $to="#111c24" />
      </Win>
      <Win $x={30} $y={400} $w={300} $h={188}>
        <Win $x={21} $y={60} $w={220} $h={46} />
        <EqScale $mt={108} $mb={16}><span>20{"\u00a0".repeat(60)}</span></EqScale>
        <EqName>PARAMETRIC</EqName>
      </Win>
      <Win $x={107} $y={400} $w={300} $h={157}>
        <EqScale $mt={76} $mb={16}><span>20{"\u00a0".repeat(60)}</span></EqScale>
        <EqName>PARAMETRIC</EqName>
      </Win>
      <Win $x={158} $y={480} $w={400} $h={127} $to="#14222a">
        <EqPlot />
        <EqScale>
          {[["20", 66], ["50", 49], ["100", 49], ["200", 65], ["500", 49], ["1k", 60]].map(([t, w]) => <span key={t} style={{ width: w }}>{t}</span>)}
        </EqScale>
        <EqFoot>
          <EqName>PARAMETRIC <b>EQ</b> <sub>2</sub></EqName><Grow />
          <RoundBtn $s={20} $mt={8} $mr={16} aria-label="Presets"><Tri w={5} h={9} /></RoundBtn>
          <RoundBtn $s={30} $mt={7} $mr={72} aria-label="Linear phase">LIN</RoundBtn>
        </EqFoot>
      </Win>
      <Air $x={294} $y={685} $w={300} $h={400} $b={4}>
        <AirHead><Tri w={4} h={8} /><Gear s={14} /><span>Fresh Air (主)</span></AirHead>
        <AirTools>
          <AirTab $on aria-label="Plugin"><Svg s={20}><path d={plugPath} /></Svg></AirTab>
          <AirTab aria-label="Plugin settings"><Svg s={26}><path d={plugPath} transform="scale(.75)" /><g transform="translate(11 12) scale(.85)"><circle cx="8" cy="8" r="4.600" {...line} strokeWidth="2" /><path d={gearPath} {...line} strokeWidth="3" /></g></Svg></AirTab>
        </AirTools>
        <AirBar>
          <Svg w={15} h={20}><rect x=".8" y=".8" width="13.400" height="18.400" rx="2" fill="none" stroke="#8297a6" strokeWidth="1.300" /><path d="M10.500 7V4.500H5v4l5.500 3v4H5V13" fill="none" stroke="#8297a6" strokeWidth="2.600" /></Svg>
          <Preset><Svg w={10} h={12}><path d="M0 5h10v7H0z" /><path d="M2 6V3.500a3 3 0 0 1 6 0V6" {...line} /></Svg>Mixbus Sparkle *</Preset>
        </AirBar>
        <AirView />
      </Air>
    </Desk>
  );
}

/* ---------- playlist ---------- */
const Playlist = styled.main`flex: 1; min-width: 0; display: flex; flex-direction: column; background: #424b52; border-right: 2px solid #343d44; padding-right: 4px;`;
const PlHead = styled.div`height: 28px; flex: none; display: flex; align-items: center; padding: 0 6px 0 13px; color: #dde4e6; font-size: 13px; line-height: 18px; white-space: nowrap;`;
const PlTools = styled.div`display: flex; align-items: center; gap: 5px; margin: 0 17px;`;
const Crumb = styled.span`margin: 0 7px 0 6px;`;
const PlBody = styled.div`flex: 1; min-height: 0; display: flex; padding-bottom: 6px;`;

const Picker = styled.aside`width: 166px; flex: none; display: flex; flex-direction: column; padding: 0 6px 0 5px;`;
const PickTabs = styled.div`height: 39px; flex: none; display: flex; align-items: center; justify-content: space-between; padding: 12px 30px 0 16px; color: #59636a; button:first-child { color: #e2e9eb; }`;
const PickBox = styled.div`flex: 1; min-height: 0; display: flex; border: 1px solid #28313a; background: #323c44;`;
const PickList = styled.ul`flex: 1; margin: 0; padding: 3px 2px 0 4px; list-style: none; display: flex; flex-direction: column; gap: 5px; border-right: 1px solid #28313a;`;
const PickItem = styled.li`
  position: relative; height: 26px; flex: none; background: linear-gradient(#465158, #3c464e);
  > svg { position: absolute; inset: 0; width: 100%; height: 100%; color: #5c686e; }
`;
const PickName = styled.button`
  position: relative; display: flex; align-items: center; gap: 3px; width: 100%; height: 25px; padding-left: 1px;
  font-family: ${NARROW}; font-size: 13px; line-height: 16px; color: #d9e1e3;
`;
const Cursor = styled.span`position: absolute; left: -3px; top: 7px; z-index: 2; svg { color: #e8414d; }`;
const PickScroll = styled.div`width: 14px; background: #373f45; i { display: flex; justify-content: center; align-items: center; height: 15px; background: #525b62; border: 1px solid #656e74; }`;
const PickFoot = styled.div`height: 20px; margin: 0 12px 0 0; display: flex; align-items: center; justify-content: center;`;

const Arranger = styled.section`flex: 1; min-width: 0; display: flex; flex-direction: column; border-left: 1px solid #28313a;`;
const ArrTop = styled.div`display: flex; height: 40px; flex: none; border-bottom: 1px solid #252e35;`;
const AddTrack = styled.button`width: 30px; background: #4b545b; border-radius: 12px 0 0 0; border: 1px solid #2d363d; border-bottom: 0; display: flex; align-items: flex-end; justify-content: center; padding-bottom: 7px; color: #e2e9eb;`;
const ClipTools = styled.div`
  width: 81px; background: #4b545b; border: 1px solid #2d363d; border-width: 1px 1px 0 0; padding: 2px 5px 0; color: #717a80; font-size: 7px;
  div { display: flex; justify-content: space-between; align-items: center; height: 15px; }
  div + div { margin-top: 5px; color: #ccd4d7; padding-left: 7px; }
  span { display: flex; align-items: center; gap: 2px; color: #dde4e6; }
`;
const Timeline = styled.div`flex: 1; min-width: 0; display: flex; flex-direction: column;`;
const Overview = styled.div`height: 20px; flex: none; display: flex; background: #3b444b; border-bottom: 2px solid #252e35;`;
const ScrollBtn = styled.button`
  width: ${(p) => p.$w || 19}px; height: ${(p) => p.$h || 19}px; flex: none; display: flex; align-items: center; justify-content: center;
  background: #525b62; border: 1px solid #656e74; color: #2c353c;
`;
const MapView = styled.div`flex: 1; position: relative; svg { width: 100%; height: 18px; }`;
const Ruler = styled.div`flex: 1; position: relative; display: flex; overflow: hidden; background: linear-gradient(90deg, #a5585b 0 ${pct(117)}, #1e2a31 ${pct(117)}); border-top: 1px solid #b56c6d;`;
const Tick = styled.span`flex: none; font-family: ${UI}; font-size: 10px; line-height: 18px; padding-left: 1px; color: ${(p) => (p.$off ? "#a9b4b8" : "#f0d9d9")};`;
const Marker = styled.span`position: absolute; top: 0; transform: translateX(-50%);`;
const SideCol = styled.div`width: 20px; flex: none; background: #373f46; border-left: 1px solid #252e35; display: flex; flex-direction: column; align-items: stretch; gap: ${(p) => p.$gap || 0}px; button { width: 100%; }`;
const Stage = styled.div`flex: 1; min-height: 0; display: flex; overflow: hidden; border-bottom: 1px solid #252e35;`;
const Heads = styled.div`width: 111px; flex: none; background: linear-gradient(90deg, #22303a 0 99px, #2d3f4a 100px 109px, #1c262e 110px);`;
const Head = styled.div`
  width: 99px; height: ${(p) => (p.$slim ? 16 : 48)}px; border-radius: 0 0 8px 0; border-bottom: 1px solid #3b444b; position: relative;
  background: linear-gradient(#4d565c, #464e55); display: flex; justify-content: space-between; align-items: flex-start; padding: ${(p) => (p.$slim ? "0" : "1px")} 4px 0 2px;
  font-family: ${NARROW}; font-size: ${(p) => (p.$slim ? 12 : 13)}px; line-height: 14px; color: ${(p) => (p.$off ? "#747c81" : "#d2d9db")};
  input { margin-top: ${(p) => (p.$slim ? 2 : 32)}px; }
  &::after { content: ${(p) => (p.$slim ? '""' : '"..."')}; position: absolute; left: 13px; bottom: 2px; font: 700 12px/12px "Liberation Sans", sans-serif; color: #363f46; }
`;
const Lanes = styled.div`flex: 1; min-width: 0; position: relative; overflow: hidden;`;
const GridLayer = styled.div`position: absolute; inset: 0; display: flex;`;
const GridCell = styled.i`flex: none; border-left: 1px solid #1d262f; background: ${(p) => (p.$alt ? "#3c444d" : "#434a54")};`;
const Beyond = styled.i`position: absolute; top: 0; bottom: 0; right: 0; background: rgba(28, 64, 76, .58);`;
const Lane = styled.div`position: relative; display: flex; height: ${(p) => (p.$slim ? 16 : 48)}px; border-bottom: 1px solid #1c252d;`;
const Clip = styled.div`
  flex: none; min-width: 0; overflow: hidden; display: flex; flex-direction: column; height: 100%;
  background: ${(p) => p.$body || "rgba(30, 38, 43, .62)"}; border-bottom: 1px solid #10171c; border-left: 1px solid rgba(24, 32, 38, .8);
`;
const ClipHead = styled.div`
  height: 16px; flex: none; display: flex; align-items: center; gap: 3px; padding: 1px 0 0 2px; white-space: nowrap;
  font-family: ${NARROW}; font-size: 12px; line-height: 15px; color: ${(p) => p.$fg || "#cdd5d8"};
  background: linear-gradient(rgba(255,255,255,.05), rgba(0,0,0,.08)), ${(p) => p.$c || "#495157"};
`;
const Notes = styled.svg`
  width: 100%; height: 30px; flex: 1; min-height: 0; color: ${(p) => p.$c || "#8cac96"};
`;
const AutoClip = styled.div`
  flex: none; height: 15px; position: relative; display: flex; align-items: center; gap: 3px; padding-left: 2px; font-family: ${NARROW}; font-size: 11px; line-height: 14px;
  color: #f0c3e4; background: linear-gradient(#b3228f, #971278); border: 1px solid #5c1050;
  > svg:last-child { position: absolute; inset: 0; width: 100%; height: 100%; }
`;
const Playhead = styled.i`position: absolute; top: 0; bottom: 0; width: 2px; background: rgba(150, 158, 168, .4);`;
const Watermark = styled.a`
  position: absolute; right: 26px; bottom: 22px; z-index: 20; color: #fff; text-decoration: none; font: 700 22px/32px "Noto Sans", sans-serif;
`;

const NoteRects = ({ n }) => NOTES[n].map(([x, y, w, h], i) => <rect key={i} x={x} y={y} width={w} height={h} fill="currentColor" opacity={[1, 7, 8, 9].includes(n) ? 0.45 : 1} />);

/* a few transients in the first half, then a steady tail */
const FX_WAVE = (() => {
  let d = "";
  for (let x = 0; x < 232; x++) {
    const n = Math.abs(Math.sin(x * 12.9898) * 43758.5453) % 1;
    let a = x < 30 ? 0.7 : 1.2;
    if (x >= 30 && x < 36) a = 2.2;
    if (x >= 45 && x < 74) a = 1.5 + n * 2.6;
    if (x >= 80 && x < 122) a = 1.3 + n * 2.2;
    if (x >= 122 && x < 145) a = 1.2 + n * 0.6;
    d += `M${x + 0.5} ${16 - a}v${2 * a}`;
  }
  return d;
})();

const Art = ({ w = 71, c, children }) => (
  <Notes $c={c} viewBox={`0 0 ${w} 32`} preserveAspectRatio="none" aria-hidden="true">{children}</Notes>
);

function TrackClip({ c, prevEnd }) {
  const place = { marginLeft: pct(c.at - prevEnd), width: pct(c.len) };
  if (c.kind === "pattern")
    return (
      <Clip style={place}>
        <ClipHead><ClipKeys /><span>样式 {c.n}</span></ClipHead>
        <Art><NoteRects n={c.n} /></Art>
      </Clip>
    );
  if (c.kind === "hit")
    return (
      <Clip style={place}>
        <ClipHead $c="#06209c" $fg="#c8d4ff"><Sample /></ClipHead>
        <Art w={24} c="#6f7ff0"><path d="M0 10h1l1 4 6 1.400h15v1.200H8L2 18l-1 4H0z" fill="currentColor" /></Art>
      </Clip>
    );
  if (c.kind === "swell")
    return (
      <Clip style={place}>
        <ClipHead $c="#66735a" $fg="#eef4e4"><Sample /></ClipHead>
        <Art w={26} c="#b9c8b4"><path d="M0 15.500h11l3-2 3-3 3 3 5 2v1.400l-5 2-3 3-3-3-3-2H0z" fill="currentColor" /></Art>
      </Clip>
    );
  if (c.kind === "fx")
    return (
      <Clip style={place} $body="rgba(30, 42, 48, .68)">
        <ClipHead $c="#587260" $fg="#dfe8df"><Sample /><span>FX (10)</span></ClipHead>
        <Art w={Math.round(c.len * 8.92)} c="#a9beb2"><path d={FX_WAVE} stroke="currentColor" strokeWidth="1.200" /></Art>
      </Clip>
    );
  return (
    <AutoClip style={place}>
      <Node w={11} h={9} /><span>Master – Volume</span>
      <svg viewBox="0 0 1066 15" preserveAspectRatio="none" aria-hidden="true"><path d="M0 2h866L1016 13" fill="none" stroke="#cf4fb4" strokeOpacity=".6" /></svg>
    </AutoClip>
  );
}

const HEAD_TOOLS = [
  ["Draw", <><path d="M2 3l3-2 9 9 1 4-4-1-9-9z" {...line} strokeWidth="1.500" /><path d="M4 5l7 7M6 3l7 7" {...line} strokeWidth="1.200" /></>],
  ["Paint", <g fill="#7fbdf0"><path d="M4 0l3 4 3 1 4 6-3 3-6-3-1-3-4 3 1-4-1-4z" /><circle cx="14" cy="13" r="2.500" /></g>],
  ["Delete", <><circle cx="8" cy="8" r="6" {...line} /><path d="M4 12l8-8" {...line} /></>],
  ["Mute", <><path d="M1 5h3l5-4v14l-5-4H1z" /><path d="M11 5l5 5M16 5l-5 5" {...line} strokeWidth="1.400" /></>],
  ["Slip", <path d="M6 3v3h4V3l6 5-6 5v-3H6v3L0 8z" />],
  ["Slice", <><path d="M0 1h7v10z" /><path d="M8 2l7 3v11H8z" /><rect x="11" y="7" width="1.500" height="3" fill="#424b52" /></>],
  ["Select", <path d="M2 5V2h4M10 2h4v3M14 11v3h-4M6 14H2v-3" {...line} strokeWidth="1.500" />],
  ["Zoom", <><circle cx="7" cy="7" r="6" {...line} strokeWidth="1.800" /><path d="M11 11l4 4" {...line} strokeWidth="2.400" /><path d="M5 10a4 4 0 0 0 5-5" {...line} strokeWidth="1" /></>],
  ["Playback", <><path d="M1 5h3l5-4v14l-5-4H1z" /><path d="M11.500 3v10M14.500 3v10" {...line} strokeWidth="1.500" /></>],
];

function MiniMap() {
  const u = 7.5;
  return (
    <MapView>
      <svg viewBox="0 0 1090 18" preserveAspectRatio="none" aria-hidden="true">
        <path d="M0 0h950v18H0z" fill="#50626a" />
        <path d="M0 0h840v18H0z" fill="#617077" />
        <path d="M120 0h240v4H120zM480 0h240v4H480z" fill="#6f7b82" />
        <path d="M360 0h120v4H360z" fill="#55666c" />
        {Array.from({ length: 14 }, (_, i) => <path key={i} d={`M${i * 60} 0v18`} stroke="#59686f" />)}
        <path d="M0 9h840M0 12h840" stroke="#6c7c80" />
        <path d="M0 5.500h896" stroke="#b04597" strokeWidth="2" />
        {[0, 16, 32, 48, 64, 80, 96, 112].map((b) => <g key={b}><path d={`M${b * u} 14h20`} stroke="#3648c8" strokeWidth="2" />{b < 112 && <path d={`M${b * u + 106} 15.500h22`} stroke="#7f9076" />}</g>)}
        <path d="M0 17.500h962" stroke="#7e9a86" />
        <path d="M949.500 0v18" stroke="#7a888e" />
      </svg>
    </MapView>
  );
}

function PlaylistWindow() {
  return (
    <Playlist>
      <PlHead>
        <HeadBtn aria-label="Playlist menu"><Tri w={5} h={9} /></HeadBtn>
        <HeadBtn aria-label="Snap" $ml={11} $c="#6fe59b"><Magnet s={15} /></HeadBtn>
        <PlTools>
          {HEAD_TOOLS.map(([label, art]) => <HeadBtn key={label} aria-label={label}><Svg s={16}>{art}</Svg></HeadBtn>)}
        </PlTools>
        <Speaker />
        <Crumb>播放列表 - Arrangement</Crumb><Svg w={4} h={8} color="#798288"><path d="M0 0l4 4-4 4z" /></Svg>
        <Crumb>Master - Volume</Crumb><Svg w={4} h={8} color="#798288"><path d="M0 0l4 4-4 4z" /></Svg>
        <Grow />
        <HeadBtn aria-label="Minimize playlist"><Svg w={8} h={10}><path d="M0 2h7v2H0z" /></Svg></HeadBtn>
        <HeadBtn aria-label="Maximize playlist" $ml={10}><Svg s={10}><path d="M1 2h8v6H1zM1 2.500h8" {...line} strokeWidth="1.500" /></Svg></HeadBtn>
        <HeadBtn aria-label="Close playlist" $ml={9}><Svg s={10}><path d="M1 1l8 8M9 1L1 9" {...line} strokeWidth="2" /></Svg></HeadBtn>
      </PlHead>
      <PlBody>
        <Picker>
          <PickTabs><HeadBtn aria-label="Patterns"><Keys w={15} h={11} /></HeadBtn><HeadBtn aria-label="Audio"><Wave /></HeadBtn><HeadBtn aria-label="Automation"><Node /></HeadBtn></PickTabs>
          <PickBox>
            <PickList>
              {[1, 2, 3, 4, 5, 6, 7, 8, 9].map((n) => (
                <PickItem key={n}>
                  <svg viewBox="0 0 71 32" preserveAspectRatio="none" aria-hidden="true"><NoteRects n={n} /></svg>
                  {n === 6 && <Cursor><Svg w={8} h={12}><path d="M0 0l7 6-7 6z" stroke="#3a1519" /></Svg></Cursor>}
                  <PickName><ClipKeys />样式 {n}</PickName>
                </PickItem>
              ))}
            </PickList>
            <PickScroll><i><Svg w={2} h={6}><path d="M0 0h2v6H0z" fill="#20292f" /></Svg></i></PickScroll>
          </PickBox>
          <PickFoot><HeadBtn aria-label="Add pattern"><Plus /></HeadBtn></PickFoot>
        </Picker>
        <Arranger>
          <ArrTop>
            <AddTrack aria-label="Add track"><Plus /></AddTrack>
            <ClipTools>
              <div><Wave w={19} h={12} /><span><Node w={17} h={14} /></span><Keys w={15} h={11} /></div>
              <div><span>步进<Svg s={11}><rect x="1" y="1" width="9" height="9" rx="3" {...line} strokeWidth="1.200" /></Svg></span><span>滑动<Svg s={9}><circle cx="4.500" cy="4.500" r="3.800" {...line} strokeWidth="1.200" /><circle cx="4.500" cy="4.500" r="1.300" /></Svg></span></div>
            </ClipTools>
            <Timeline>
              <Overview>
                <ScrollBtn aria-label="Scroll left" $w={20}><Chev dir="left" /></ScrollBtn>
                <MiniMap />
                <ScrollBtn aria-label="Scroll right"><Chev dir="right" /></ScrollBtn>
              </Overview>
              <Ruler>
                {Array.from({ length: 32 }, (_, i) => <Tick key={i} $off={i > 29} style={{ width: pct(4) }}>{i * 4 + 1}</Tick>)}
                <Marker style={{ left: pct(21) }}><Svg w={16} h={12}><path d="M1 1h14L8 10z" fill="#8fd04a" stroke="#2d3a1e" strokeWidth="1.500" /><path d="M1 1h14" stroke="#e2f0cf" /></Svg></Marker>
              </Ruler>
            </Timeline>
            <SideCol $gap={1}>
              <ScrollBtn aria-label="Playlist options"><Svg s={4}><circle cx="2" cy="2" r="2" /></Svg></ScrollBtn>
              <ScrollBtn aria-label="Scroll up"><Chev dir="up" /></ScrollBtn>
            </SideCol>
          </ArrTop>
          <Stage>
            <Heads>
              {TRACKS.map((t) => (
                <Head key={t.name} $slim={t.slim} $off={t.off}>
                  <span>{t.name}</span>
                  <Led type="checkbox" defaultChecked aria-label={`${t.name} on`} />
                </Head>
              ))}
            </Heads>
            <Lanes>
              <GridLayer>{Array.from({ length: 64 }, (_, i) => <GridCell key={i} $alt={(i >> 1) % 2 === 1} style={{ width: pct(2) }} />)}</GridLayer>
              <Beyond style={{ left: pct(117) }} />
              {TRACKS.map((t) => (
                <Lane key={t.name} $slim={t.slim}>
                  {t.clips.map((c, i) => {
                    const prev = t.clips[i - 1];
                    return <TrackClip key={c.at} c={c} prevEnd={prev ? prev.at + prev.len : 1} />;
                  })}
                </Lane>
              ))}
              <Playhead style={{ left: pct(21) }} />
            </Lanes>
            <SideCol>
              <ScrollBtn aria-label="Scroll thumb" $h={33} />
              <Grow />
              <ScrollBtn aria-label="Scroll down"><Chev dir="down" /></ScrollBtn>
            </SideCol>
          </Stage>
        </Arranger>
      </PlBody>
    </Playlist>
  );
}

const Work = styled.div`position: relative; flex: 1; min-height: 0; display: flex;`;

export default function App() {
  return (
    <Shell>
      <Global />
      <TopBar />
      <Work>
        <Desktop />
        <PlaylistWindow />
        <Watermark href="#home">www.flpdown.com</Watermark>
      </Work>
    </Shell>
  );
}
